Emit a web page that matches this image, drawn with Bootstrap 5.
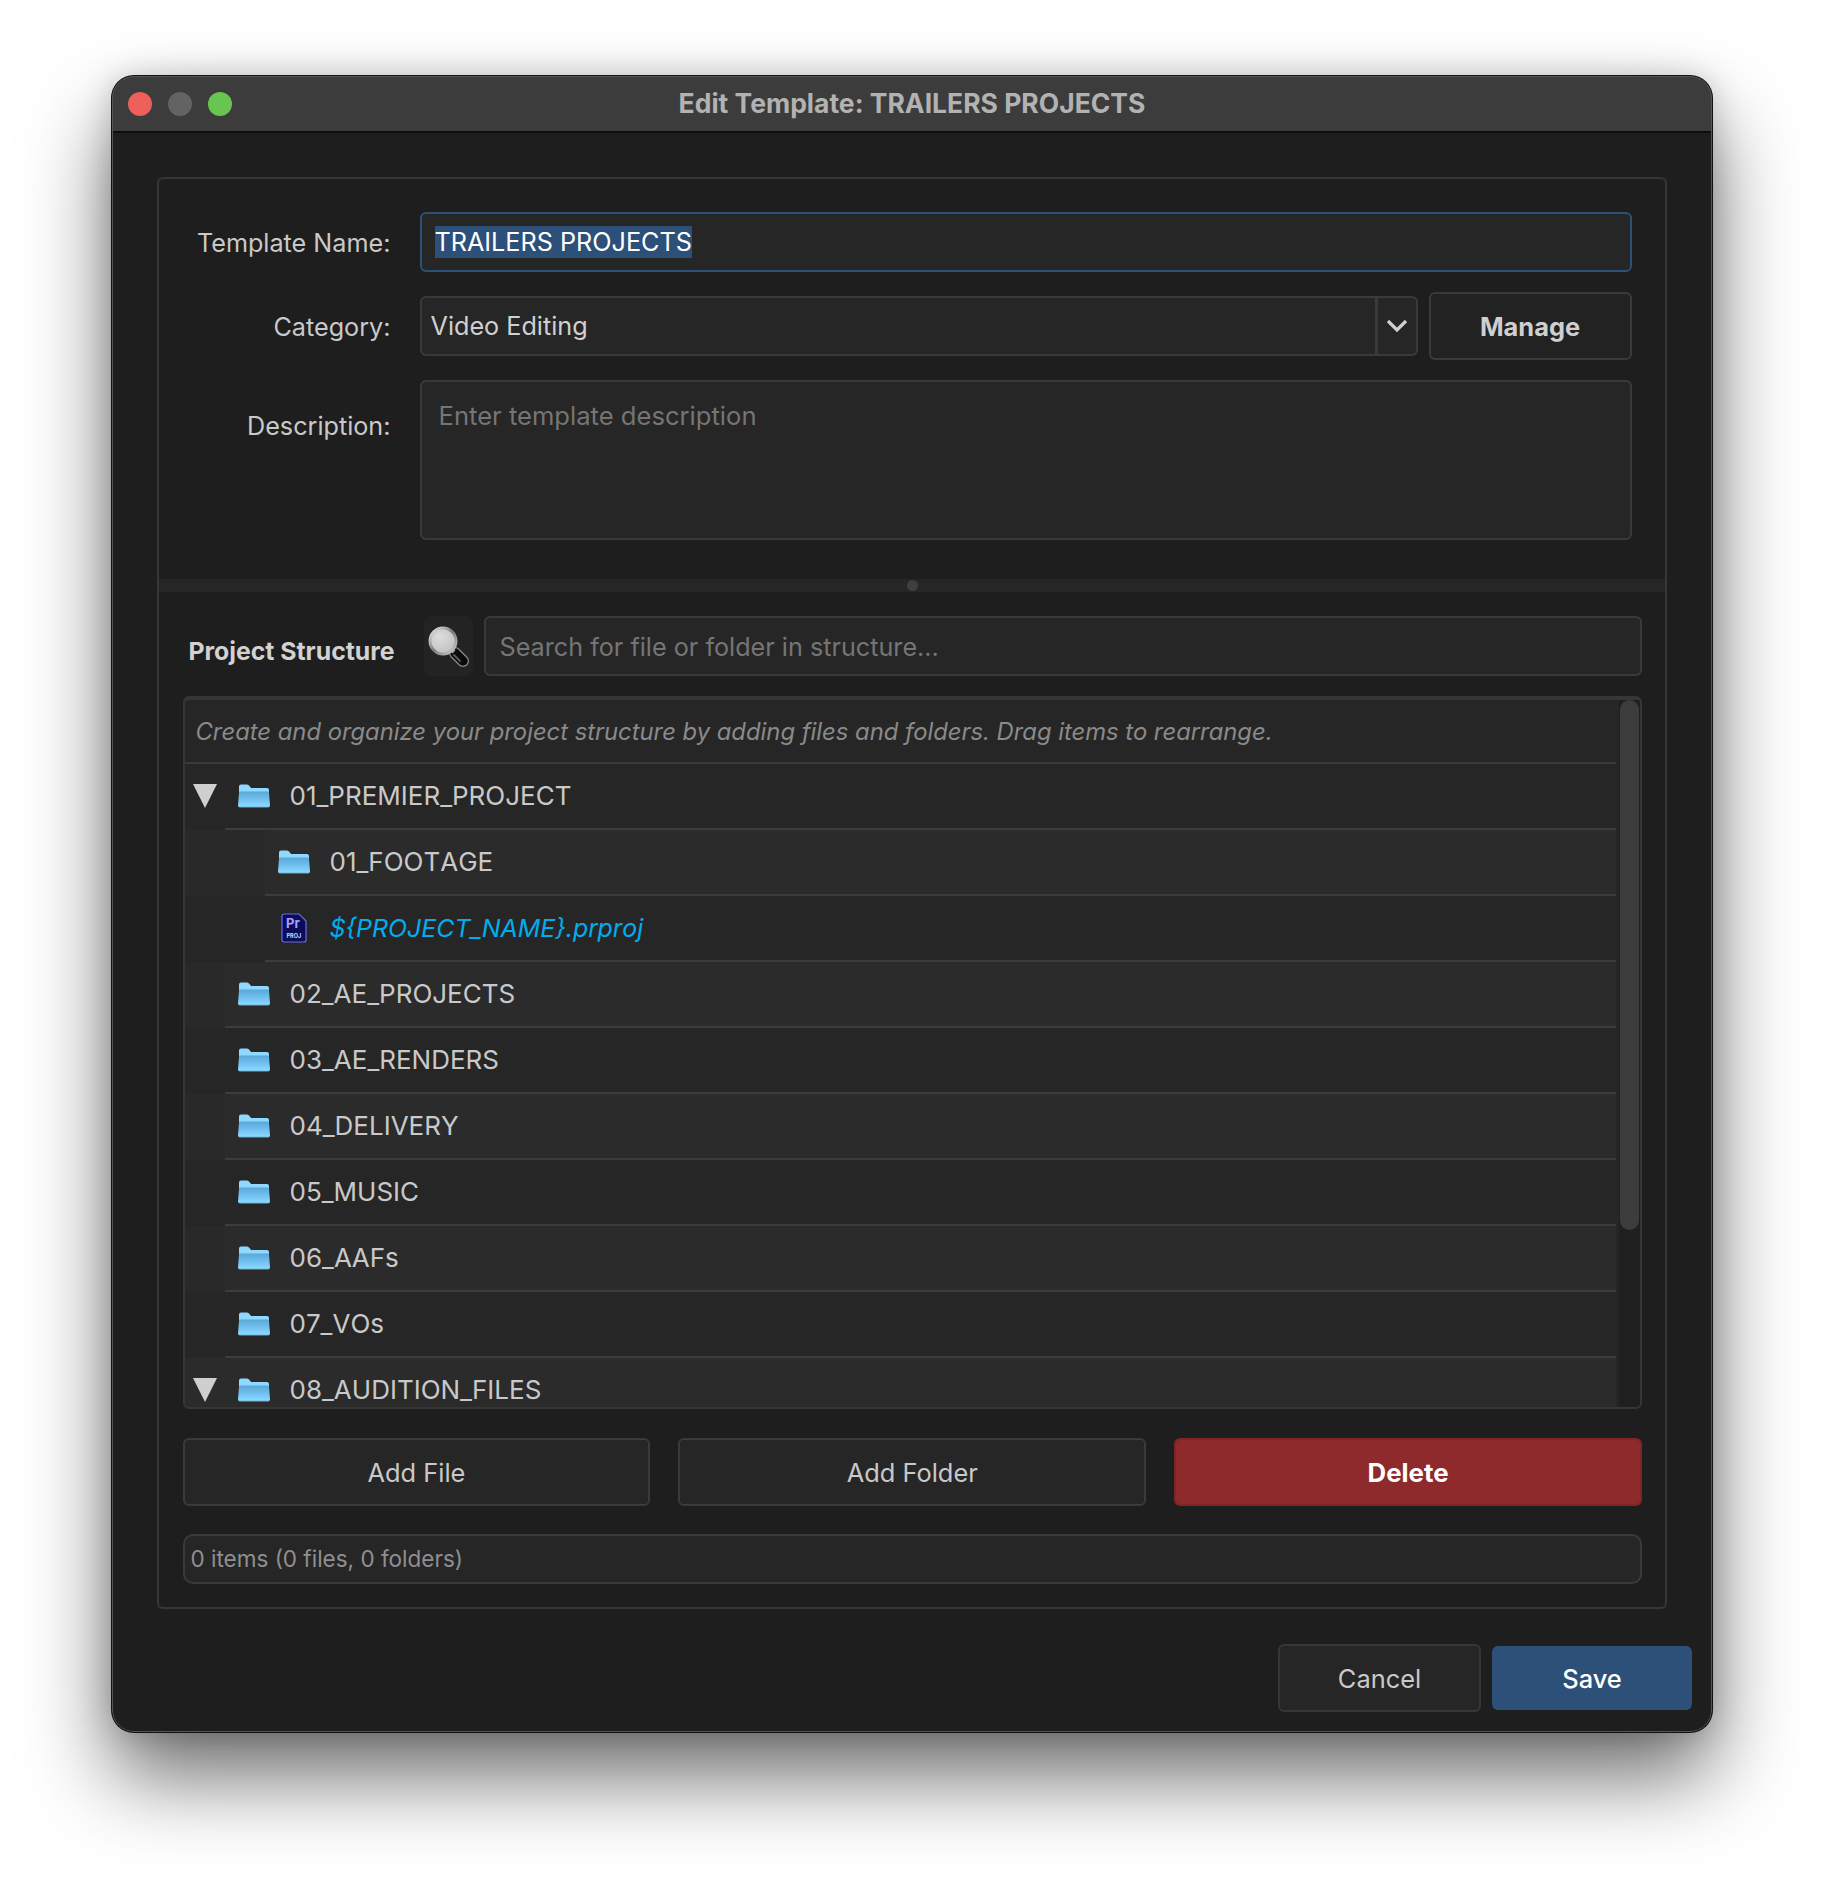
<!doctype html>
<html lang="en">
<head>
<meta charset="utf-8">
<title>Edit Template</title>
<link href="https://cdn.jsdelivr.net/npm/bootstrap@5.3.0/dist/css/bootstrap.min.css" rel="stylesheet">
<style>
html,body{background:#fff;margin:0;height:1880px;overflow:hidden}
body{font-family:Inter,"Liberation Sans",sans-serif;font-size:25.2px;line-height:32px;color:#c9c9c9}
.stage{padding:76px 112px 0 112px}
.appwin{width:1600px;height:1656px;background:#1e1e1e;border-radius:22px;overflow:hidden;position:relative;
 box-shadow:0 0 0 1px #111,0 44px 84px rgba(0,0,0,.58),0 0 30px rgba(0,0,0,.18)}
.appwin::after{content:"";position:absolute;inset:0;border:1px solid #555;border-radius:22px;pointer-events:none}
.titlebar{height:57px;background:#3c3c3c;border-bottom:2px solid #0d0d0d;position:relative}
.titletext{font-weight:700;font-size:26.5px;color:#b2b2b2;text-align:center;line-height:54px}
.lights{position:absolute;left:16px;top:16px;gap:16px}
.light{width:24px;height:24px;border-radius:50%}
.l-red{background:#ec5f5a}.l-gray{background:#636363}.l-green{background:#68c650}
.panel{margin:44px 45px 0 44.5px;height:1432px;border:2px solid #363636;border-radius:6px}
.upper{padding:33px 33px 0 0;height:400px}
.lblcol{width:232px;flex:none;text-align:right;margin-right:29px;color:#c9c9c9;padding-top:2px}
.formrow{margin-bottom:20px}
.form-control.fieldbox{background:#262626;border:2px solid #3a3a3a;border-radius:6px;color:#d0d0d0;font-size:25.2px;line-height:32px;box-shadow:none}
.form-control.fieldbox::placeholder{color:#757575}
.namebox{height:60px;padding:12px 13px 10px;border-color:#2c5078 !important}
.sel{background:#2c5078;color:#fff;display:inline-block;height:32px}
.catbox{height:60px;padding:12px 9px 10px}
.chevbox{width:42px;height:60px;padding:0;justify-content:center;background:#262626;border:2px solid #3a3a3a;border-radius:0 6px 6px 0}
.catgroup{width:998px;flex:none}
.manage{width:203px;height:68px;margin-left:11px;font-weight:700;color:#cfcfcf;font-size:25.4px;background:#222;border:2px solid #3a3a3a;border-radius:6px;line-height:32px;padding-top:8px}
.form-control.descbox{height:160px;padding:18px 17px 8px;resize:none;font-size:25.6px}
.desclabel{padding-top:30px}
.splitter{height:13px;background:#262626;position:relative}
.splitdot{position:absolute;left:748px;top:1px;width:11px;height:11px;border-radius:50%;background:#3f3f3f}
.lower{padding:24px 23px 0 24px}
.sectitle{width:241px;flex:none;font-weight:700;font-size:24.8px;color:#d2d2d2;padding:11px 0 0 6px;height:60px;line-height:48px;white-space:nowrap}
.searchbtn{width:49px;height:60px;flex:none;background:#232323;border-radius:8px;margin-right:11px}
.form-control.searchbox{height:60px;padding:12px 14px 10px}
.treebox{margin-top:20px;height:713px;border:2px solid #363636;border-radius:6px;background:#262626;overflow:hidden;border-top-width:4px}
.treelist{flex:1 1 auto;min-width:0;overflow:hidden;padding-right:3px}
.hintrow{height:64px;line-height:63px;padding-left:11px;font-style:italic;color:#8a8a8a;font-size:23.8px;border-bottom:2px solid #3a3a3a}
.treerow{height:66px;flex:none;background:#262626;font-size:26px;font-kerning:none}
.rowalt{background:#2b2b2b}
.rowmain{flex:1 1 auto;border-bottom:2px solid #3c3c3c;height:66px}
.ind0{width:40px;flex:none}.ind1{width:80px;flex:none}
.rowdark{background:#292929}
.arrowslot{width:40px;height:64px;flex:none;padding-left:8px}
.iconslot{width:65px;flex:none;padding-left:13px}
.pricon{padding-left:16px}
.scrolltrack{width:21px;flex:none;background:#1f1f1f;padding:0 1px}
.scrollthumb{height:530px;background:#3c3c3c;border-radius:10px}
.blue{color:#00aeef;font-style:italic;font-size:24.9px}
.actbtn{flex:1 1 0;height:68px;font-size:25.4px;line-height:32px;color:#c9c9c9;background:#262626;border:2px solid #3a3a3a;border-radius:6px;padding-top:8px}
.actbtn-del{background:#8f2a2c;border-color:#7e2527;color:#fff;font-weight:700;font-size:25.8px}
.actrow{margin-top:29px;gap:28px}
.statusline{margin-top:28px;height:50px;background:#262626;border:2px solid #3a3a3a;border-radius:10px;color:#8f8f8f;font-size:22.5px;line-height:46px;padding-left:6px}
.dlgbtns{margin-top:35px;padding-right:20px;gap:11px}
.cancelb{width:203px;height:68px;background:#262626;border:2px solid #363636;border-radius:6px;color:#c9c9c9;font-size:25.4px;padding-top:8px}
.saveb{width:200px;height:64px;background:#2c5078;border:0;border-radius:6px;color:#fff;font-size:25.4px;font-weight:500;padding-top:8px}
</style>
</head>
<body>
<svg width="0" height="0" class="d-block" aria-hidden="true">
 <defs>
  <linearGradient id="fg" x1="0" y1="0" x2="0" y2="1"><stop offset="0" stop-color="#5aa7d6"/><stop offset=".55" stop-color="#74c3f2"/><stop offset=".9" stop-color="#8ad6fc"/><stop offset="1" stop-color="#62aed8"/></linearGradient>
  <linearGradient id="ring" x1="0" y1="0" x2="1" y2="1"><stop offset="0" stop-color="#f0f0f0"/><stop offset=".5" stop-color="#7a7a7a"/><stop offset="1" stop-color="#d0d0d0"/></linearGradient>
  <symbol id="folder" viewBox="0 0 32 24">
   <path d="M1 2.500q0-2 2-2h6q1.500 0 2.500 1.500L13 4h16q2 0 2 2v5H1z" fill="#8fd8ff"/>
   <path d="M1 8.500q0-1 1-1h28q1 0 1 1l1 13q0 2-2 2H2q-2 0-2-2z" fill="url(#fg)"/>
  </symbol>
  <symbol id="tri" viewBox="0 0 24 24"><polygon points="0,0 24,0 12,24" fill="#cfcfcf"/></symbol>
 </defs>
</svg>
<div class="stage">
 <div class="appwin">
  <div class="titlebar">
   <div class="lights d-flex"><div class="light l-red"></div><div class="light l-gray"></div><div class="light l-green"></div></div>
   <div class="titletext">Edit Template: TRAILERS PROJECTS</div>
  </div>
  <div class="panel">
   <div class="upper">
    <div class="d-flex align-items-center formrow">
     <div class="lblcol">Template Name:</div>
     <div class="form-control fieldbox namebox"><span class="sel">TRAILERS PROJECTS</span></div>
    </div>
    <div class="d-flex align-items-center formrow">
     <div class="lblcol">Category:</div>
     <div class="input-group catgroup">
      <div class="form-control fieldbox catbox">Video Editing</div>
      <span class="input-group-text chevbox"><svg width="22" height="14" viewBox="0 0 22 14"><path d="M2 2l9 9 9-9" fill="none" stroke="#cfcfcf" stroke-width="3.200"/></svg></span>
     </div>
     <button class="btn manage" type="button">Manage</button>
    </div>
    <div class="d-flex align-items-start">
     <div class="lblcol desclabel">Description:</div>
     <textarea class="form-control fieldbox descbox" placeholder="Enter template description"></textarea>
    </div>
   </div>
   <div class="splitter"><div class="splitdot"></div></div>
   <div class="lower">
    <div class="d-flex align-items-center">
     <div class="sectitle">Project Structure</div>
     <div class="searchbtn d-flex align-items-center justify-content-center">
      <svg width="42" height="42" viewBox="0 0 42 42">
       <defs><radialGradient id="lens" cx=".4" cy=".35" r=".8"><stop offset="0" stop-color="#dcdcdc"/><stop offset="1" stop-color="#bdbdbd"/></radialGradient></defs>
       <line x1="28" y1="28" x2="36" y2="36" stroke="#8a8a8a" stroke-width="12" stroke-linecap="round"/>
       <line x1="28" y1="28" x2="36" y2="36" stroke="#0a0a0a" stroke-width="9.500" stroke-linecap="round"/>
       <line x1="27" y1="30" x2="33" y2="36" stroke="#5a5a5a" stroke-width="2" stroke-linecap="round"/>
       <line x1="23" y1="23" x2="27" y2="27" stroke="#9a9a9a" stroke-width="4"/>
       <circle cx="16" cy="16" r="13" fill="url(#lens)" stroke="url(#ring)" stroke-width="3"/>
      </svg>
     </div>
     <input class="form-control fieldbox searchbox" placeholder="Search for file or folder in structure...">
    </div>
    <div class="treebox d-flex">
     <div class="treelist">
      <div class="hintrow">Create and organize your project structure by adding files and folders. Drag items to rearrange.</div>
      <div class="treerow d-flex"><div class="arrowslot d-flex align-items-center"><svg width="24" height="24"><use href="#tri"/></svg></div><div class="rowmain d-flex align-items-center"><div class="iconslot"><svg class="d-block" width="32" height="24"><use href="#folder"/></svg></div><span>01_PREMIER_PROJECT</span></div></div>
      <div class="treerow d-flex rowalt"><div class="ind1 rowdark"></div><div class="rowmain d-flex align-items-center"><div class="iconslot"><svg class="d-block" width="32" height="24"><use href="#folder"/></svg></div><span>01_FOOTAGE</span></div></div>
      <div class="treerow d-flex"><div class="ind1"></div><div class="rowmain d-flex align-items-center"><div class="iconslot pricon">
        <svg class="d-block" width="26" height="30" viewBox="0 0 26 30"><path d="M3 1h15l7 7v19a2 2 0 0 1-2 2H3a2 2 0 0 1-2-2V3a2 2 0 0 1 2-2z" fill="#0c0c5c" stroke="#6b6be0" stroke-width="1.200"/><text x="5" y="15" font-family="Inter,sans-serif" font-weight="700" font-size="13" fill="#a3a3ff">Pr</text><text x="5.500" y="25" font-family="Inter,sans-serif" font-weight="700" font-size="5.500" fill="#d8d8e8">PROJ</text></svg>
       </div><span class="blue">${PROJECT_NAME}.prproj</span></div></div>
      <div class="treerow d-flex rowalt"><div class="ind0 rowdark"></div><div class="rowmain d-flex align-items-center"><div class="iconslot"><svg class="d-block" width="32" height="24"><use href="#folder"/></svg></div><span>02_AE_PROJECTS</span></div></div>
      <div class="treerow d-flex"><div class="ind0"></div><div class="rowmain d-flex align-items-center"><div class="iconslot"><svg class="d-block" width="32" height="24"><use href="#folder"/></svg></div><span>03_AE_RENDERS</span></div></div>
      <div class="treerow d-flex rowalt"><div class="ind0 rowdark"></div><div class="rowmain d-flex align-items-center"><div class="iconslot"><svg class="d-block" width="32" height="24"><use href="#folder"/></svg></div><span>04_DELIVERY</span></div></div>
      <div class="treerow d-flex"><div class="ind0"></div><div class="rowmain d-flex align-items-center"><div class="iconslot"><svg class="d-block" width="32" height="24"><use href="#folder"/></svg></div><span>05_MUSIC</span></div></div>
      <div class="treerow d-flex rowalt"><div class="ind0 rowdark"></div><div class="rowmain d-flex align-items-center"><div class="iconslot"><svg class="d-block" width="32" height="24"><use href="#folder"/></svg></div><span>06_AAFs</span></div></div>
      <div class="treerow d-flex"><div class="ind0"></div><div class="rowmain d-flex align-items-center"><div class="iconslot"><svg class="d-block" width="32" height="24"><use href="#folder"/></svg></div><span>07_VOs</span></div></div>
      <div class="treerow d-flex rowalt"><div class="arrowslot d-flex align-items-center"><svg width="24" height="24"><use href="#tri"/></svg></div><div class="rowmain d-flex align-items-center"><div class="iconslot"><svg class="d-block" width="32" height="24"><use href="#folder"/></svg></div><span>08_AUDITION_FILES</span></div></div>
     </div>
     <div class="scrolltrack"><div class="scrollthumb"></div></div>
    </div>
    <div class="d-flex actrow">
     <button class="btn actbtn" type="button">Add File</button>
     <button class="btn actbtn" type="button">Add Folder</button>
     <button class="btn actbtn actbtn-del" type="button">Delete</button>
    </div>
    <div class="statusline">0 items (0 files, 0 folders)</div>
   </div>
  </div>
  <div class="d-flex justify-content-end align-items-center dlgbtns">
   <button class="btn cancelb" type="button">Cancel</button>
   <button class="btn saveb" type="button">Save</button>
  </div>
 </div>
</div>
<script src="https://cdn.jsdelivr.net/npm/bootstrap@5.3.0/dist/js/bootstrap.bundle.min.js"></script>
</body>
</html>
